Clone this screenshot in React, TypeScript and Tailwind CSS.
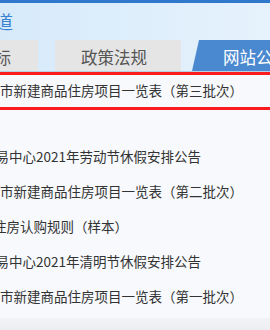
import React from "react";

const rows = [
  { text: "易中心2021年劳动节休假安排公告", shift: "-ml-[4.5px]" },
  { text: "市新建商品住房项目一览表（第二批次）", shift: "ml-0" },
  { text: "住房认购规则（样本）", shift: "-ml-[7px]" },
  { text: "易中心2021年清明节休假安排公告", shift: "-ml-[4.5px]" },
  { text: "市新建商品住房项目一览表（第一批次）", shift: "ml-0" },
];

const App: React.FC = () => {
  return (
    <div className="flex h-[330px] w-[270px] flex-col overflow-hidden bg-[#f7f9fc] font-['Noto_Sans_CJK_SC','Noto_Sans',sans-serif]">
      <div className="h-[3px] shrink-0 bg-[#2f78cc]" />

      <div className="shrink-0 bg-gradient-to-r from-[#d6eafa] to-[#e6f2fc]">
        <div className="h-[37px] whitespace-nowrap">
          <span className="-ml-[5px] mt-[9px] inline-block text-[18px] leading-none text-[#3a83d1]">
            道
          </span>
        </div>

        <div className="flex h-[31px] whitespace-nowrap">
          <div className="-ml-[80px] flex w-[118px] shrink-0 items-center bg-[#e5e5e5] pl-[25px] pt-[3px] text-[16.5px] leading-none text-[#555]">
            项目招标
          </div>
          <div className="ml-[17px] flex w-[126px] shrink-0 items-center bg-[#e5e5e5] pl-[26px] pt-[3px] text-[16.5px] leading-none text-[#555]">
            政策法规
          </div>
          <div className="ml-[11px] flex w-[126px] shrink-0 items-center bg-[#4a88cf] pl-[31px] pt-[3px] text-[16.5px] leading-none text-white [clip-path:polygon(7px_0,100%_0,100%_100%,0_100%)]">
            网站公告
          </div>
        </div>
        <div className="h-px bg-[#b7cde4]" />
      </div>

      <div className="flex h-[38px] shrink-0 items-center whitespace-nowrap border-y-[3px] border-[#fb1d1d] bg-[#f8f9fc] text-[13.5px] leading-none text-[#333]">
        <span className="-mt-[1px]">市新建商品住房项目一览表（第三批次）</span>
      </div>

      <div className="flex flex-col pt-[29px]">
        {rows.map((row) => (
          <div
            key={row.text}
            className="flex h-[35px] items-center whitespace-nowrap text-[13.5px] leading-none text-[#333]"
          >
            <span className={row.shift}>{row.text}</span>
          </div>
        ))}
      </div>

      <div className="mt-auto h-[12px] shrink-0 bg-gradient-to-b from-[#f1f3f6] to-[#eceef2]" />
    </div>
  );
};

export default App;
